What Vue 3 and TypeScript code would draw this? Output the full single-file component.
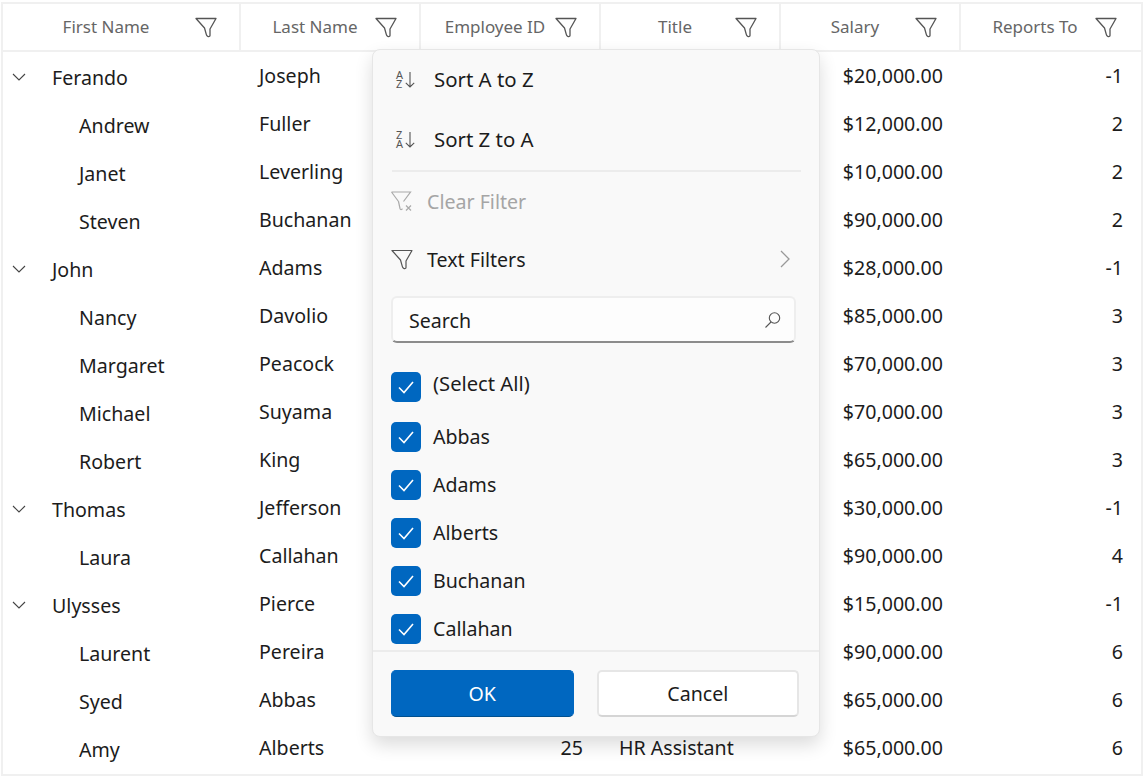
<script setup lang="ts">
interface Employee {
  first: string
  last: string
  id?: number
  title?: string
  salary: string
  reports: number
  child: boolean
}

const columns = ['First Name', 'Last Name', 'Employee ID', 'Title', 'Salary', 'Reports To']

const rows: Employee[] = [
  { first: 'Ferando', last: 'Joseph', salary: '$20,000.00', reports: -1, child: false },
  { first: 'Andrew', last: 'Fuller', salary: '$12,000.00', reports: 2, child: true },
  { first: 'Janet', last: 'Leverling', salary: '$10,000.00', reports: 2, child: true },
  { first: 'Steven', last: 'Buchanan', salary: '$90,000.00', reports: 2, child: true },
  { first: 'John', last: 'Adams', salary: '$28,000.00', reports: -1, child: false },
  { first: 'Nancy', last: 'Davolio', salary: '$85,000.00', reports: 3, child: true },
  { first: 'Margaret', last: 'Peacock', salary: '$70,000.00', reports: 3, child: true },
  { first: 'Michael', last: 'Suyama', salary: '$70,000.00', reports: 3, child: true },
  { first: 'Robert', last: 'King', salary: '$65,000.00', reports: 3, child: true },
  { first: 'Thomas', last: 'Jefferson', salary: '$30,000.00', reports: -1, child: false },
  { first: 'Laura', last: 'Callahan', salary: '$90,000.00', reports: 4, child: true },
  { first: 'Ulysses', last: 'Pierce', salary: '$15,000.00', reports: -1, child: false },
  { first: 'Laurent', last: 'Pereira', salary: '$90,000.00', reports: 6, child: true },
  { first: 'Syed', last: 'Abbas', salary: '$65,000.00', reports: 6, child: true },
  { first: 'Amy', last: 'Alberts', id: 25, title: 'HR Assistant', salary: '$65,000.00', reports: 6, child: true }
]

const filterValues = ['Abbas', 'Adams', 'Alberts', 'Buchanan', 'Callahan']
const funnel = 'M2 3.5H22L16 14v6.5c0 1-1.3 1.3-2.2.9-.8-.4-1.3-1-1.5-2L10.5 13z'
</script>

<template>
  <div class="page">
    <div class="grid">
      <div class="head">
        <div v-for="col in columns" :key="col" class="head-cell">
          <span class="head-label">{{ col }}</span>
          <svg class="head-funnel" viewBox="0 0 24 24" width="24" height="24">
            <path :d="funnel" fill="none" stroke="#555" stroke-width="1.3" stroke-linejoin="round" />
          </svg>
        </div>
      </div>

      <div v-for="row in rows" :key="row.first" class="row">
        <div class="cell first" :class="{ child: row.child }">
          <svg v-if="!row.child" class="chevron" viewBox="0 0 14 8" width="14" height="8">
            <path d="M1 1l6 6 6-6" fill="none" stroke="#444" stroke-width="1.1" />
          </svg>
          {{ row.first }}
        </div>
        <div class="cell">{{ row.last }}</div>
        <div class="cell right">{{ row.id }}</div>
        <div class="cell">{{ row.title }}</div>
        <div class="cell right">{{ row.salary }}</div>
        <div class="cell right">{{ row.reports }}</div>
      </div>

      <div class="popup">
        <div class="menu-item sort">
          <svg viewBox="0 0 24 24" width="24" height="24">
            <text x="1" y="12" class="sort-letter">A</text>
            <text x="1" y="21" class="sort-letter">Z</text>
            <path d="M15 5v15M10.8 15.8L15 20l4.2-4.2" fill="none" stroke="#555" stroke-width="1.1" />
          </svg>
          <span class="sort-label">Sort A to Z</span>
        </div>
        <div class="menu-item sort">
          <svg viewBox="0 0 24 24" width="24" height="24">
            <text x="1" y="12" class="sort-letter">Z</text>
            <text x="1" y="21" class="sort-letter">A</text>
            <path d="M15 5v15M10.8 15.8L15 20l4.2-4.2" fill="none" stroke="#555" stroke-width="1.1" />
          </svg>
          <span class="sort-label">Sort Z to A</span>
        </div>
        <div class="separator"></div>
        <div class="menu-item filter disabled">
          <svg viewBox="0 0 24 24" width="24" height="24">
            <path d="M1.5 3h19l-7 9.5M8.5 12.5L1.5 3M8.5 12.5l1.5 7c.3 1 1 1.3 1.8.8l.7-.5" fill="none" stroke="#aaa" stroke-width="1.2" />
            <path d="M16 16.5l5 5M21 16.5l-5 5" stroke="#aaa" stroke-width="1.2" />
          </svg>
          <span>Clear Filter</span>
        </div>
        <div class="menu-item filter">
          <svg viewBox="0 0 24 24" width="24" height="24">
            <path :d="funnel" fill="none" stroke="#555" stroke-width="1.2" stroke-linejoin="round" />
          </svg>
          <span class="grow">Text Filters</span>
          <svg class="arrow" viewBox="0 0 10 18" width="10" height="18">
            <path d="M1 1l8 8-8 8" fill="none" stroke="#999" stroke-width="1.3" />
          </svg>
        </div>

        <div class="search">
          <span class="grow">Search</span>
          <svg viewBox="0 0 18 18" width="18" height="18">
            <circle cx="10.5" cy="7" r="5.2" fill="none" stroke="#555" stroke-width="1.1" />
            <path d="M7 11L1.5 16.5" stroke="#555" stroke-width="1.1" />
          </svg>
        </div>

        <div class="list">
          <div class="check-row select-all">
            <span class="box">
              <svg viewBox="0 0 18 14" width="18" height="14">
                <path d="M2 7.5l5 5L16 2" fill="none" stroke="#fff" stroke-width="1.6" />
              </svg>
            </span>
            <span class="check-label">(Select All)</span>
          </div>
          <div v-for="value in filterValues" :key="value" class="check-row">
            <span class="box">
              <svg viewBox="0 0 18 14" width="18" height="14">
                <path d="M2 7.5l5 5L16 2" fill="none" stroke="#fff" stroke-width="1.6" />
              </svg>
            </span>
            <span>{{ value }}</span>
          </div>
        </div>

        <div class="footer">
          <button class="btn ok">OK</button>
          <button class="btn cancel">Cancel</button>
        </div>
      </div>
    </div>
  </div>
</template>

<style scoped>
.page {
  width: 1145px;
  height: 778px;
  padding: 2px 0 0 1px;
  box-sizing: border-box;
  background: #fff;
  font-family: "Noto Sans", "Liberation Sans", sans-serif;
  color: #1c1c1c;
}

.grid {
  position: relative;
  width: 1142px;
  height: 774px;
  box-sizing: border-box;
  border: 2px solid #f0f0f0;
}

.head {
  display: grid;
  grid-template-columns: 238px repeat(5, 180px);
  height: 46px;
  border-bottom: 2px solid #f0f0f0;
}

.head-cell {
  display: flex;
  align-items: center;
  border-right: 2px solid #f0f0f0;
  box-sizing: border-box;
  font-size: 17px;
  color: #666;
}

.head-cell:last-child {
  border-right-color: transparent;
}

.head-label {
  flex: 1;
  padding-bottom: 2px;
  text-align: center;
  white-space: nowrap;
}

.head-funnel {
  margin: 0 21px 0 -15px;
  flex: none;
}

.row {
  display: grid;
  grid-template-columns: 238px repeat(5, 180px);
  height: 48px;
  font-size: 19.6px;
}

.cell {
  display: flex;
  align-items: center;
  padding: 0 18px 2px 18px;
  white-space: nowrap;
}

.cell.right {
  justify-content: flex-end;
}

.cell.first {
  padding: 2px 0 0 49px;
}

.cell.first.child {
  padding-left: 76px;
}

.chevron {
  position: absolute;
  left: 9px;
}

.popup {
  position: absolute;
  left: 369px;
  top: 45px;
  width: 448px;
  height: 688px;
  box-sizing: border-box;
  display: flex;
  flex-direction: column;
  border: 1px solid #e6e6e6;
  border-radius: 8px;
  background: #f9f9f9;
  box-shadow: 0 8px 18px rgba(0, 0, 0, 0.14);
  font-size: 19.6px;
  overflow: hidden;
}

.menu-item {
  display: flex;
  align-items: center;
  flex: none;
  box-sizing: border-box;
}

.menu-item.sort {
  height: 60px;
  padding: 0 18px 2px 22px;
  gap: 15px;
}

.sort-label {
  font-size: 20.4px;
}

.menu-item.filter {
  height: 58px;
  padding: 0 18px 2px 17px;
  gap: 13px;
}

.menu-item.disabled {
  color: #a5a5a5;
}

.sort-letter {
  font-size: 11px;
  fill: #555;
  font-family: "Noto Sans", sans-serif;
}

.separator {
  flex: none;
  height: 2px;
  margin: 0 18px 1px 19px;
  background: #ececec;
}

.grow {
  flex: 1;
}

.arrow {
  margin-right: 11px;
}

.search {
  flex: none;
  display: flex;
  align-items: center;
  height: 47px;
  margin: 7px 23px 0 18px;
  padding: 1px 12px 0 16px;
  box-sizing: border-box;
  background: #fdfdfd;
  border: 2px solid #eeeeee;
  border-bottom-color: #8c8c8c;
  border-radius: 6px;
}

.list {
  flex: 1;
  min-height: 0;
  overflow: hidden;
  padding: 20px 0 0 18px;
}

.check-row {
  display: flex;
  align-items: center;
  gap: 12px;
  height: 48px;
}

.check-row.select-all {
  margin: -1px 0 2px;
}

.check-label {
  margin-top: -6px;
  font-size: 20.2px;
}

.box {
  display: flex;
  align-items: center;
  justify-content: center;
  width: 30px;
  height: 30px;
  margin-top: 2px;
  border-radius: 5px;
  background: #0067c0;
}

.footer {
  flex: none;
  display: flex;
  gap: 23px;
  height: 86px;
  box-sizing: border-box;
  padding: 18px 20px 0 18px;
  border-top: 2px solid #ececec;
}

.btn {
  height: 47px;
  border-radius: 5px;
  font: inherit;
  padding: 0;
}

.btn.ok {
  width: 183px;
  background: #0067c0;
  border: 1px solid #0067c0;
  border-bottom-color: #00508f;
  color: #fff;
}

.btn.cancel {
  width: 203px;
  background: #fff;
  border: 2px solid #e6e6e6;
  border-bottom-color: #d5d5d5;
  color: #1c1c1c;
}
</style>
